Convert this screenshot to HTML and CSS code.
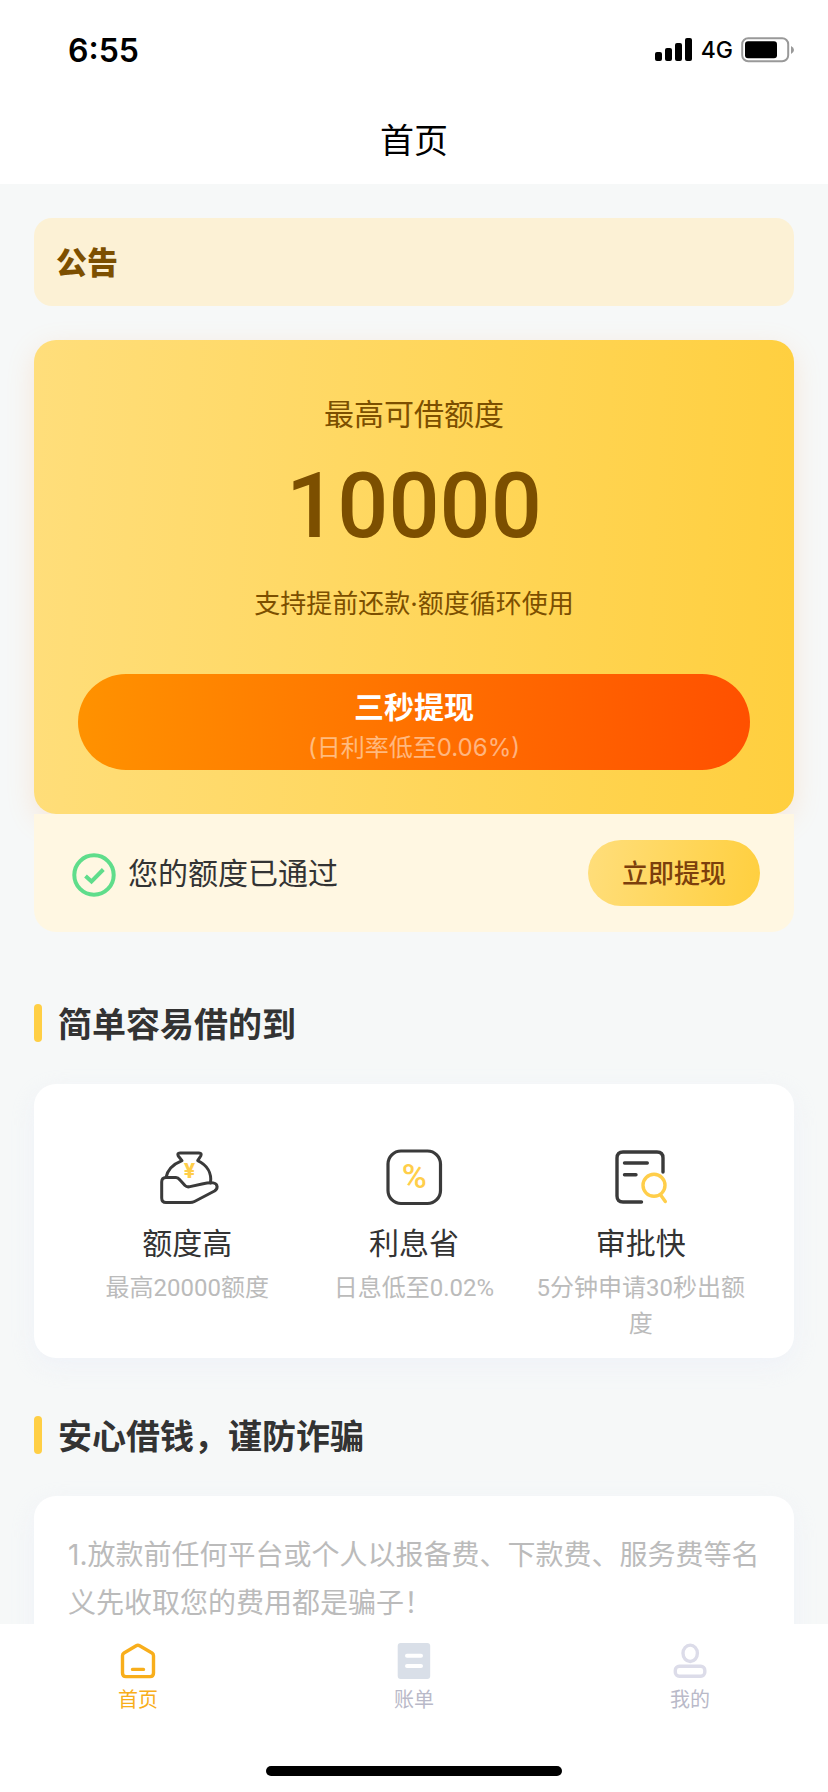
FILE: index.html
```html
<!DOCTYPE html>
<html lang="zh-CN">
<head>
<meta charset="utf-8">
<meta name="viewport" content="width=device-width, initial-scale=1">
<title>首页</title>
<link rel="stylesheet" href="styles.css">
</head>
<body>
<header class="header">
  <div class="status">
    <span class="time">6:55</span>
    <div class="signals">
      <svg class="bars" viewBox="0 0 38 24" aria-hidden="true"><rect x="0" y="14" width="7" height="9" rx="2"/><rect x="10" y="10" width="7" height="13" rx="2"/><rect x="20" y="5" width="7" height="18" rx="2"/><rect x="30" y="0" width="7" height="23" rx="2"/></svg>
      <span class="network">4G</span>
      <svg class="battery" viewBox="0 0 54 26" aria-hidden="true"><rect x="1.2" y="1.2" width="46" height="23" rx="6" fill="none" stroke="#999" stroke-width="2"/><rect x="4" y="4.300" width="32" height="17" rx="3"/><path d="M50 9v8q3-1.500 3-4t-3-4z" fill="#999"/></svg>
    </div>
  </div>
  <h1 class="page-title">首页</h1>
</header>

<main class="content">
  <section class="notice"><strong class="notice-label">公告</strong></section>

  <section class="loan">
    <div class="quota">
      <p class="quota-label">最高可借额度</p>
      <p class="quota-value">10000</p>
      <p class="quota-note">支持提前还款·额度循环使用</p>
      <button class="withdraw" type="button">
        <span class="withdraw-title">三秒提现</span>
        <span class="withdraw-rate">(日利率低至0.06%)</span>
      </button>
    </div>
    <div class="approved">
      <svg class="check" viewBox="0 0 44 44" fill="none" stroke="#5fdd8b" stroke-width="4" aria-hidden="true"><circle cx="22" cy="22" r="19.700"/><path d="M13.500 23l6 5.500L31.300 16.500"/></svg>
      <span class="approved-text">您的额度已通过</span>
      <button class="now" type="button">立即提现</button>
    </div>
  </section>

  <h2 class="section-title"><span>简单容易借的到</span></h2>
  <section class="card features">
    <div class="feature">
      <svg class="feature-icon" viewBox="0 0 66 60" fill="none" stroke="#3a3a3a" stroke-width="3" stroke-linejoin="round" stroke-linecap="round" aria-hidden="true">
        <path d="M12 30.500C13.500 23 19.500 17 28 13.600L24.300 9Q22.800 6 26 6H45Q48.200 6 46.700 9L43.700 13.600C53 18 58 26 56.500 36"/>
        <path d="M12 30.500H22Q24 30.500 26 33L31 38.500Q33 40.500 36 39.600L48 37Q63 33.500 63 39.500Q63.500 42 60.500 44L40.500 54.500Q38.500 55.500 36 55.500H12Q7.700 55.500 7.700 51V35Q7.700 30.500 12 30.500Z"/>
        <text class="yen" x="35.500" y="30.500" text-anchor="middle">¥</text>
      </svg>
      <h3 class="feature-name">额度高</h3>
      <p class="feature-note">最高20000额度</p>
    </div>
    <div class="feature">
      <svg class="feature-icon" viewBox="0 0 66 60" fill="none" stroke="#3a3a3a" stroke-width="3.200" aria-hidden="true">
        <rect x="7" y="4" width="52.500" height="52.500" rx="13"/>
        <text class="percent" x="33.300" y="41" text-anchor="middle">%</text>
      </svg>
      <h3 class="feature-name">利息省</h3>
      <p class="feature-note">日息低至0.02%</p>
    </div>
    <div class="feature">
      <svg class="feature-icon" viewBox="0 0 66 60" fill="none" stroke="#3a3a3a" stroke-width="3.400" stroke-linecap="round" aria-hidden="true">
        <path d="M33.500 55H15Q9 55 9 49V11Q9 5 15 5H49Q55 5 55 11V25M16.500 16H39.300M16.500 27.700H28"/>
        <path d="M53 48.500L57.300 54.500" stroke="#ffce4a"/><circle cx="46" cy="38.300" r="11" stroke="#ffce4a"/>
      </svg>
      <h3 class="feature-name">审批快</h3>
      <p class="feature-note">5分钟申请30秒出额度</p>
    </div>
  </section>

  <h2 class="section-title"><span>安心借钱，谨防诈骗</span></h2>
  <section class="card warning">
    <p>1.放款前任何平台或个人以报备费、下款费、服务费等名义先收取您的费用都是骗子！</p>
  </section>
</main>

<footer class="footer">
  <nav class="tabs">
    <a class="tab active" href="#home">
      <svg class="tab-icon" viewBox="0 0 40 40" fill="none" stroke="#f8ae1b" stroke-width="3.400" stroke-linejoin="round" stroke-linecap="round" aria-hidden="true"><path d="M18.200 5.800Q19.900 4.800 21.600 5.800L34 13Q35.500 14 35.500 15.700V33Q35.500 36.600 32 36.600H8Q4.500 36.600 4.500 33V15.700Q4.500 14 6 13ZM14.500 29.400H25.500"/></svg>
      <span>首页</span>
    </a>
    <a class="tab" href="#bills">
      <svg class="tab-icon" viewBox="0 0 40 40" aria-hidden="true"><rect x="3.700" y="3" width="32.500" height="36" rx="3" fill="#d9dfe8"/><path d="M13 15.700H27M13 26H27" stroke="#fff" stroke-width="4" stroke-linecap="round"/></svg>
      <span>账单</span>
    </a>
    <a class="tab" href="#mine">
      <svg class="tab-icon" viewBox="0 0 40 40" fill="none" stroke="#dcdce9" stroke-width="3.400" aria-hidden="true"><ellipse cx="20.200" cy="13.300" rx="7.200" ry="8.200"/><rect x="5.300" y="26.300" width="29.500" height="10" rx="4"/></svg>
      <span>我的</span>
    </a>
  </nav>
  <div class="home-bar"></div>
</footer>
</body>
</html>
```

FILE: styles.css
```css
* {
  box-sizing: border-box;
}

body {
  display: flex;
  flex-direction: column;
  height: 100vh;
  margin: 0;
  overflow: hidden;
  background: #f6f8f8;
  color: #333;
  font-family: Inter, "Noto Sans CJK SC", sans-serif;
}

h1, h2, h3, p {
  margin: 0;
}

button {
  border: 0;
  font-family: inherit;
  cursor: pointer;
}

.header {
  flex: none;
  background: #fff;
  color: #000;
}

.status {
  display: flex;
  align-items: center;
  justify-content: space-between;
  height: 100px;
  padding: 0 33px 0 68px;
}

.time {
  font-size: 32px;
  font-weight: 600;
}

.signals {
  display: flex;
  align-items: center;
  gap: 8px;
}

.bars {
  width: 38px;
  height: 24px;
}

.network {
  font-size: 23px;
  font-weight: 500;
}

.battery {
  width: 54px;
  height: 26px;
}

.page-title {
  padding: 16px 0 18px;
  font-size: 34px;
  font-weight: 400;
  line-height: 50px;
  text-align: center;
}

.content {
  flex: 1;
  min-height: 0;
  padding: 34px 34px 0;
  overflow: hidden;
}

.notice {
  display: flex;
  align-items: center;
  height: 88px;
  padding: 0 22px 4px;
  border-radius: 18px;
  background: #fcf1d5;
}

.notice-label {
  color: #7c4f00;
  font-size: 31px;
  font-style: oblique 8deg;
  font-weight: 900;
}

.loan {
  margin-top: 34px;
}

.quota {
  display: flex;
  flex-direction: column;
  align-items: center;
  padding: 51px 44px 44px;
  border-radius: 22px;
  background: linear-gradient(93deg, #ffde7b, #ffcf3e);
  box-shadow: 0 8px 28px rgba(255, 160, 90, 0.2);
  color: #7c4f00;
  text-align: center;
}

.quota-label {
  font-size: 30px;
  line-height: 46px;
}

.quota-value {
  margin-top: 20px;
  font-family: Roboto, sans-serif;
  font-size: 90px;
  font-weight: 500;
  line-height: 100px;
}

.quota-note {
  margin-top: 28px;
  font-size: 26px;
  line-height: 38px;
}

.withdraw {
  display: flex;
  flex-direction: column;
  align-items: center;
  width: 100%;
  height: 96px;
  margin-top: 51px;
  padding: 11px 0 0;
  border-radius: 48px;
  background: linear-gradient(93deg, #ff9200, #ff5000);
  color: #fff;
}

.withdraw-title {
  font-size: 30px;
  font-weight: 700;
  line-height: 44px;
}

.withdraw-rate {
  color: rgba(255, 255, 255, 0.5);
  font-size: 24px;
  font-weight: 400;
  line-height: 38px;
}

.approved {
  position: relative;
  display: flex;
  align-items: center;
  height: 118px;
  padding: 0 34px 0 38px;
  border-radius: 0 0 22px 22px;
  background: #fff7e2;
}

.check {
  width: 44px;
  height: 44px;
  margin: 4px 12px 0 0;
}

.approved-text {
  padding-bottom: 4px;
  font-size: 30px;
}

.now {
  height: 66px;
  margin-left: auto;
  padding: 0 34px 4px;
  border-radius: 33px;
  background: linear-gradient(100deg, #ffde7b, #ffcf3e);
  color: #7c3f0c;
  font-size: 26px;
  font-weight: 500;
}

.section-title {
  display: flex;
  align-items: center;
  gap: 16px;
  padding: 64px 0 34px;
  font-size: 34px;
  font-weight: 700;
  line-height: 50px;
}

.section-title::before {
  content: "";
  width: 8px;
  height: 38px;
  border-radius: 4px;
  background: #ffcf45;
}

.section-title span {
  padding-top: 4px;
}

.card {
  border-radius: 22px;
  background: #fff;
  box-shadow: 0 8px 24px rgba(235, 238, 248, 0.6);
}

.features {
  display: grid;
  grid-template-columns: repeat(3, 1fr);
  padding: 63px 40px 16px;
}

.feature {
  text-align: center;
}

.feature-icon {
  display: block;
  width: 66px;
  height: 60px;
  margin: 0 auto;
}

.yen, .percent {
  fill: #ffce4a;
  stroke: none;
}

.yen {
  font-family: Inter, sans-serif;
  font-size: 20px;
  font-weight: 800;
}

.percent {
  font-family: Roboto, sans-serif;
  font-size: 34px;
  font-weight: 500;
}

.feature-name {
  margin-top: 14px;
  font-size: 30px;
  font-weight: 400;
  line-height: 44px;
}

.feature-note {
  margin-top: 5px;
  color: #bbb;
  font-family: Roboto, "Noto Sans CJK SC", sans-serif;
  font-size: 24px;
  line-height: 36px;
}

.features + .section-title {
  padding-top: 50px;
}

.warning {
  padding: 35px 28px 34px 34px;
  color: #bbb;
  font-size: 28px;
  line-height: 48px;
}

.footer {
  flex: none;
  background: #fff;
}

.tabs {
  display: grid;
  grid-template-columns: repeat(3, 1fr);
  padding-top: 16px;
}

.tab {
  display: flex;
  flex-direction: column;
  align-items: center;
  gap: 6px;
  color: #b9b9c8;
  font-size: 20px;
  line-height: 28px;
  text-decoration: none;
}

.tab.active {
  color: #f8ae1b;
}

.tab-icon {
  width: 40px;
  height: 40px;
}

.home-bar {
  width: 296px;
  height: 10px;
  margin: 52px auto 16px;
  border-radius: 5px;
  background: #000;
}
```
